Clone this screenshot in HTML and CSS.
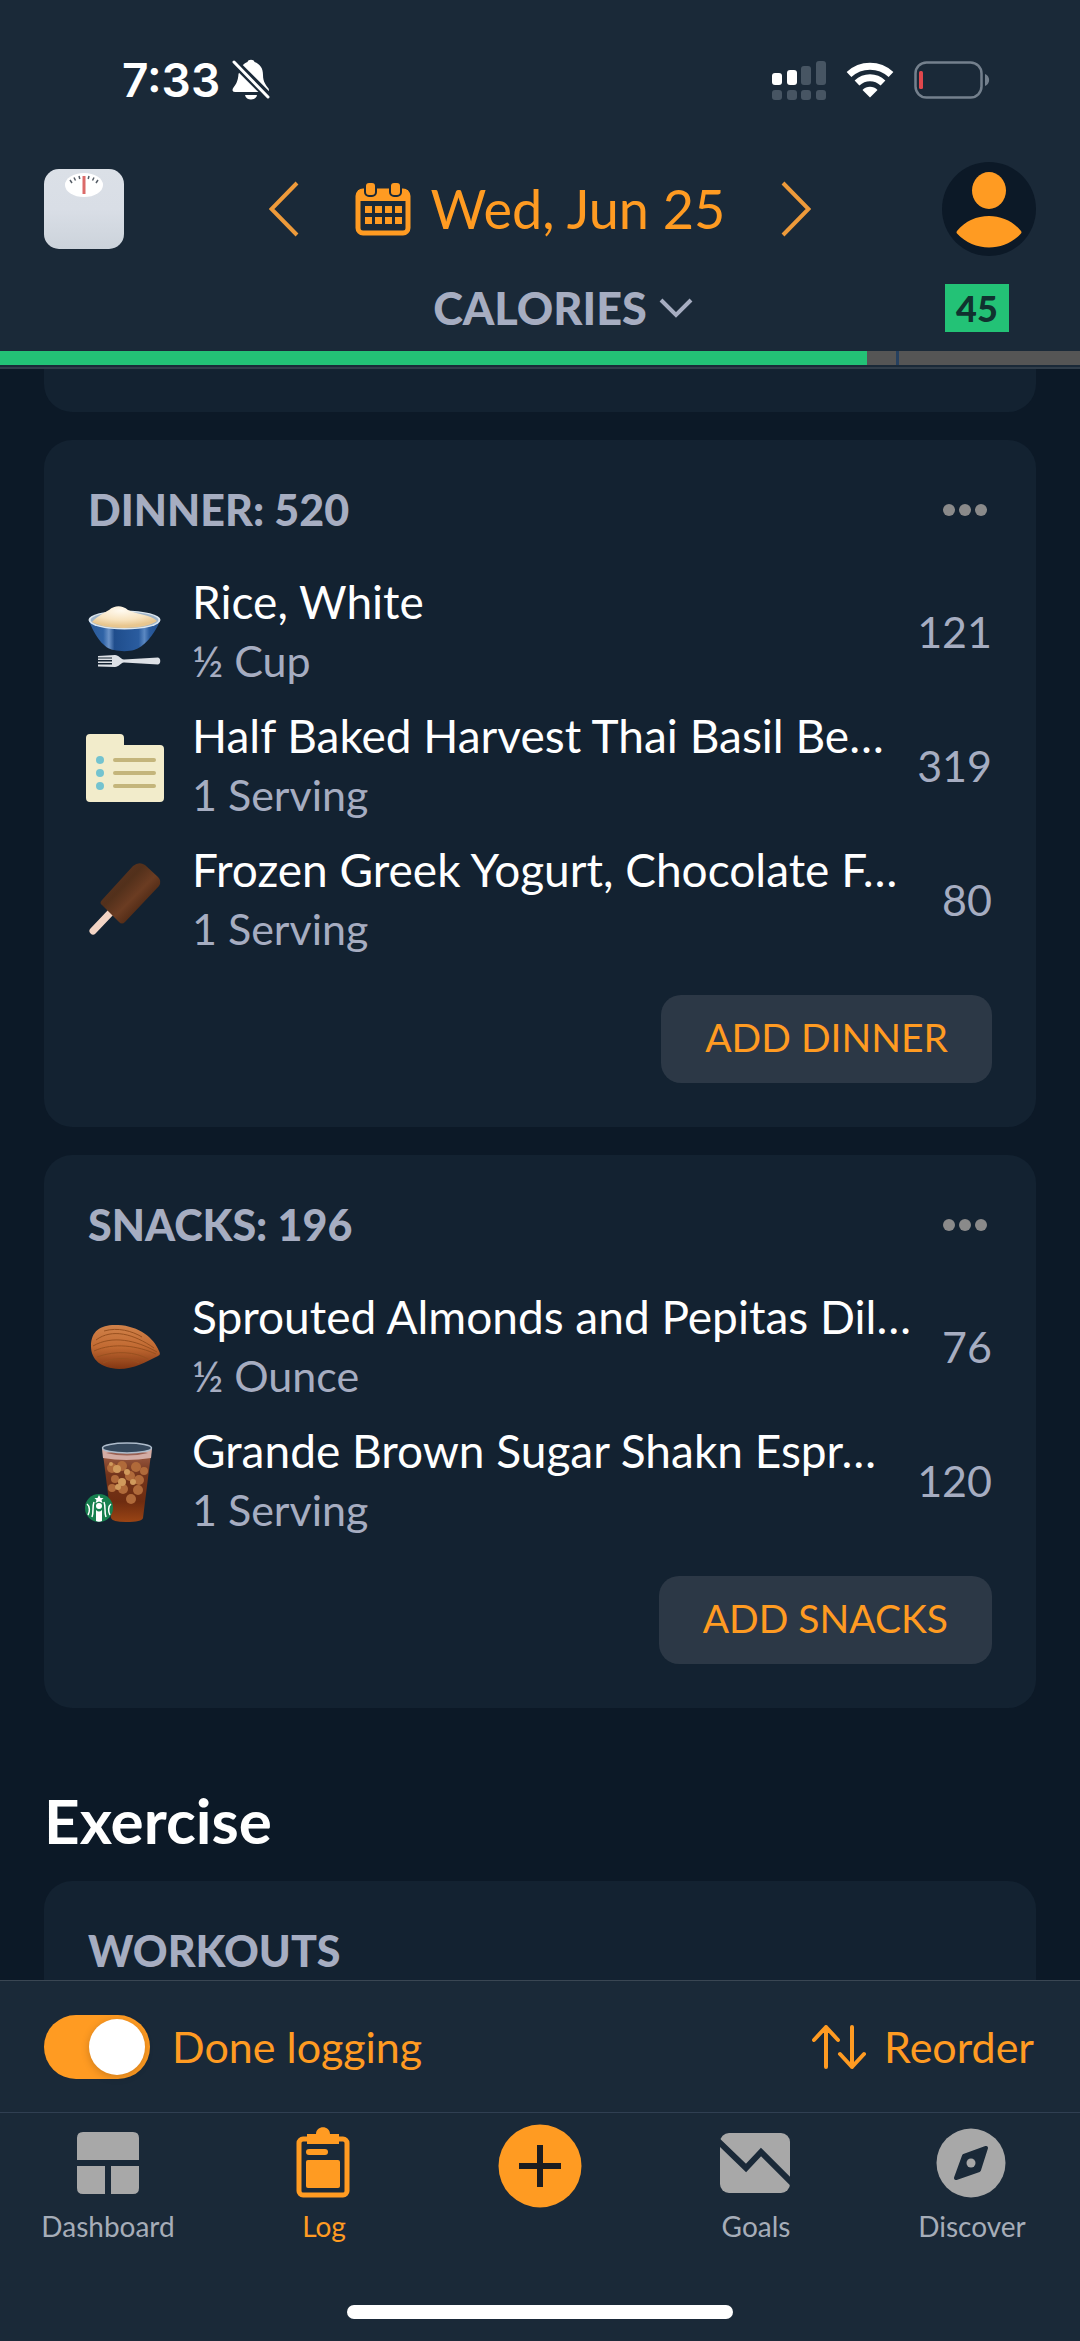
FILE: index.html
```html
<!DOCTYPE html>
<html lang="en">
<head>
    <meta charset="UTF-8">
    <meta name="viewport" content="width=device-width, initial-scale=1">
    <title>Food Log</title>
    <link rel="stylesheet" href="styles.css">
</head>
<body>

    <header class="header">
        <div class="status">
            <div class="status-left">
                <span class="time">7:33</span>
                <svg class="bell" width="38" height="42" viewBox="0 0 38 42">
                    <path fill="#fff" d="M10 7 C12 4.500 14 3.500 15.500 3 C16 0 22 0 22.500 3 C28 5 31 9 31 16 C31 23 34 26 36.500 29.500 C37.500 31.500 37 33 34.500 33 L3 33 C0 33 0 30.500 1.500 28.500 C4 25.500 6 22 6.500 15 Z"/>
                    <path fill="#fff" d="M13 36 L25 36 C24 42 14 42 13 36 Z"/>
                    <path stroke="#1a2938" stroke-width="8" d="M1 2 L37 38"/>
                    <path stroke="#fff" stroke-width="3" stroke-linecap="round" d="M2 3 L36 38"/>
                </svg>
            </div>
            <div class="status-right">
                <svg width="54" height="40" viewBox="0 0 54 40">
                    <g fill="#fff">
                        <rect x="0" y="13" width="10" height="12" rx="3"/>
                        <rect x="15" y="10" width="10" height="15" rx="3"/>
                    </g>
                    <g fill="#475563">
                        <rect x="29" y="6" width="10" height="19" rx="3"/>
                        <rect x="44" y="1" width="10" height="24" rx="3"/>
                        <rect x="0" y="30" width="10" height="10" rx="3"/>
                        <rect x="15" y="30" width="10" height="10" rx="3"/>
                        <rect x="29" y="30" width="10" height="10" rx="3"/>
                        <rect x="44" y="30" width="10" height="10" rx="3"/>
                    </g>
                </svg>
                <svg width="48" height="36" viewBox="0 0 48 36">
                    <g fill="none" stroke="#fff" stroke-width="7">
                        <path d="M3 12.500 C15 1.500 33 1.500 45 12.500"/>
                        <path d="M11 21 C18.500 14 29.500 14 37 21"/>
                    </g>
                    <path fill="#fff" d="M24 35.500 L16.500 28 C20.500 23.800 27.500 23.800 31.500 28 Z"/>
                </svg>
                <svg width="76" height="38" viewBox="0 0 76 38">
                    <rect x="1.500" y="1.500" width="66" height="35" rx="11" fill="none" stroke="#74808d" stroke-width="2.500"/>
                    <rect x="5" y="10" width="4" height="18" rx="1.500" fill="#e0474c"/>
                    <path fill="#74808d" d="M71 13 C76.500 15 76.500 23 71 25 Z"/>
                </svg>
            </div>
        </div>

        <div class="date-row">
            <button class="icon-btn" aria-label="Weigh in">
                <svg width="80" height="82" viewBox="0 0 80 82">
                    <defs>
                        <linearGradient id="scaleBody" x1="0" y1="0" x2="0" y2="1">
                            <stop offset="0" stop-color="#dbe0e7"/>
                            <stop offset="0.500" stop-color="#d9dee6"/>
                            <stop offset="1" stop-color="#ccd3db"/>
                        </linearGradient>
                    </defs>
                    <rect y="1" width="80" height="80" rx="15" fill="url(#scaleBody)"/>
                    <ellipse cx="40" cy="17" rx="19" ry="12" fill="#fff"/>
                    <g stroke="#555d66" stroke-width="1.500">
                        <path d="M26 12 l2 3 M30 9.500 l1.500 3 M35 8 l0.800 3 M45 8 l-0.800 3 M50 9.500 l-1.500 3 M54 12 l-2 3"/>
                    </g>
                    <rect x="38.500" y="8" width="3" height="18" fill="#db6a69"/>
                </svg>
            </button>
            <div class="date-nav">
                <button class="icon-btn" aria-label="Previous day">
                    <svg width="30" height="56" viewBox="0 0 30 56"><path class="line" d="M28 2 L2.500 28 L28 54"/></svg>
                </button>
                <button class="date-btn">
                    <svg width="56" height="54" viewBox="0 0 56 54">
                        <rect x="3" y="9" width="50" height="42" rx="5" fill="none" stroke="#ff9b22" stroke-width="5"/>
                        <rect x="3" y="8" width="50" height="11" fill="#ff9b22"/>
                        <g fill="#ff9b22" stroke="#1a2938" stroke-width="2">
                            <rect x="10" y="0" width="11" height="14" rx="4"/>
                            <rect x="35" y="0" width="11" height="14" rx="4"/>
                        </g>
                        <g fill="#ff9b22">
                            <path d="M10 24h7v7h-7z M20 24h7v7h-7z M30 24h7v7h-7z M40 24h7v7h-7z"/>
                            <path d="M10 35h7v7h-7z M20 35h7v7h-7z M30 35h7v7h-7z M40 35h7v7h-7z"/>
                        </g>
                    </svg>
                    <span>Wed, Jun 25</span>
                </button>
                <button class="icon-btn" aria-label="Next day">
                    <svg width="30" height="56" viewBox="0 0 30 56"><path class="line" d="M2 2 L27.500 28 L2 54"/></svg>
                </button>
            </div>
            <button class="icon-btn profile" aria-label="Profile">
                <svg width="94" height="94" viewBox="0 0 94 94">
                    <circle cx="47" cy="47" r="47" fill="#0c1927"/>
                    <ellipse cx="47" cy="28.500" rx="17" ry="18.500" fill="#ff9b22"/>
                    <path fill="#ff9b22" d="M15 69 C31 49 63 49 79 69 C79.800 70 79.500 71 79 71.500 C62 90 32 90 15 71.500 C14.500 71 14.200 70 15 69 Z"/>
                </svg>
            </button>
        </div>

        <div class="budget-row">
            <button class="budget-btn">
                <span>CALORIES</span>
                <svg width="34" height="22" viewBox="0 0 34 22"><path fill="none" stroke="#a6adc1" stroke-width="4" d="M2 3 L17 18 L32 3"/></svg>
            </button>
            <span class="badge">45</span>
        </div>

        <div class="progress">
            <div class="progress-fill"></div>
            <div class="progress-mark"></div>
        </div>
    </header>

    <main class="content">
        <section class="card card-prev"></section>

        <section class="card">
            <div class="card-head">
                <h2>DINNER: 520</h2>
                <button class="more" aria-label="Dinner options"><i></i><i></i><i></i></button>
            </div>
            <ul class="foods">
                <li class="food">
                    <svg class="food-icon" width="80" height="80" viewBox="0 0 80 80">
                        <defs>
                            <linearGradient id="bowl" x1="0" y1="0" x2="1" y2="0">
                                <stop offset="0" stop-color="#2c5a96"/>
                                <stop offset="0.200" stop-color="#2f63a6"/>
                                <stop offset="0.280" stop-color="#6b93c8"/>
                                <stop offset="0.360" stop-color="#1f4d8c"/>
                                <stop offset="0.700" stop-color="#2a5c9f"/>
                                <stop offset="0.780" stop-color="#5b88c2"/>
                                <stop offset="0.850" stop-color="#2a5c9f"/>
                                <stop offset="1" stop-color="#234f8a"/>
                            </linearGradient>
                            <radialGradient id="rice" cx="0.450" cy="0.200" r="0.700">
                                <stop offset="0" stop-color="#fffaf0"/>
                                <stop offset="0.600" stop-color="#f8e4c0"/>
                                <stop offset="1" stop-color="#e8c68f"/>
                            </radialGradient>
                        </defs>
                        <path fill="url(#bowl)" d="M5 28 C11 43 20 56 30 57 C36 58.500 45 58.500 50 57 C60 54 70 42 76 28 Z"/>
                        <ellipse cx="40.500" cy="27" rx="36" ry="9.500" fill="#dce6ee"/>
                        <ellipse cx="40.500" cy="27" rx="34" ry="8" fill="#9fb4c8"/>
                        <path fill="url(#rice)" d="M8 29 C15 22 20 20 25 17 C31 12 38 12 44 17 C53 22 66 21 73 28 C62 37 20 37 8 29 Z"/>
                        <path fill="#dde1e6" d="M14 63 L31 62 C35 62 36 66 40 66.500 L74 64.500 C77 65 77 71 74 71.500 L40 69.500 C36 70 35 74 31 74 L14 73.500 L14 71.500 L28 71.500 L28 70 L14 70 L14 68.500 L28 68.500 L28 67 L14 67 L14 65.500 L28 65.500 L28 64.500 L14 64.500 Z"/>
                    </svg>
                    <div class="food-text"><h3>Rice, White</h3><p>½ Cup</p></div>
                    <span class="cals">121</span>
                </li>
                <li class="food">
                    <svg class="food-icon" width="80" height="80" viewBox="0 0 80 80">
                        <path fill="#f2eccb" d="M6 7 H36 Q40 7 40 11 V18 H76 Q80 18 80 22 V71 Q80 75 76 75 H6 Q2 75 2 71 V11 Q2 7 6 7 Z"/>
                        <g fill="#74c3cf"><circle cx="16" cy="33" r="4"/><circle cx="16" cy="46" r="4"/><circle cx="16" cy="59" r="4"/></g>
                        <path stroke="#c4b57b" stroke-width="4" stroke-linecap="round" d="M31 33 H70 M31 46 H70 M31 59 H70"/>
                    </svg>
                    <div class="food-text"><h3>Half Baked Harvest Thai Basil Be…</h3><p>1 Serving</p></div>
                    <span class="cals">319</span>
                </li>
                <li class="food">
                    <svg class="food-icon" width="80" height="80" viewBox="0 0 80 80">
                        <defs>
                            <linearGradient id="choc" x1="0.200" y1="0.200" x2="0.800" y2="0.800">
                                <stop offset="0" stop-color="#5a331f"/>
                                <stop offset="0.300" stop-color="#52301b"/>
                                <stop offset="0.600" stop-color="#6b3c22"/>
                                <stop offset="1" stop-color="#42210f"/>
                            </linearGradient>
                        </defs>
                        <path stroke="#f3d5c5" stroke-width="7" stroke-linecap="round" d="M9 70 L28 50"/>
                        <path fill="url(#choc)" d="M18 39 L49 5 Q55 0 61 4 L74 16 Q78 20 75 25 L41 61 Q38 64 35 61 L18 44 Q15 42 18 39 Z"/>
                    </svg>
                    <div class="food-text"><h3>Frozen Greek Yogurt, Chocolate F…</h3><p>1 Serving</p></div>
                    <span class="cals">80</span>
                </li>
            </ul>
            <div class="card-foot">
                <button class="add-btn">ADD DINNER</button>
            </div>
        </section>

        <section class="card">
            <div class="card-head">
                <h2>SNACKS: 196</h2>
                <button class="more" aria-label="Snack options"><i></i><i></i><i></i></button>
            </div>
            <ul class="foods">
                <li class="food">
                    <svg class="food-icon" width="80" height="80" viewBox="0 0 80 80">
                        <defs>
                            <linearGradient id="almond" x1="0" y1="0" x2="0" y2="1">
                                <stop offset="0" stop-color="#d0824a"/>
                                <stop offset="0.500" stop-color="#c26a32"/>
                                <stop offset="1" stop-color="#823612"/>
                            </linearGradient>
                        </defs>
                        <path fill="url(#almond)" d="M7 38 C7 22 18 16 34 17 C55 18 70 30 75 43 C76.500 46 76 47 74 48 C62 54 50 61 35 61 C17 60 7 52 7 38 Z"/>
                        <path fill="none" stroke="#98501f" stroke-width="1" d="M12 32 C28 20 50 26 70 40 M9 38 C28 27 52 32 73 44 M10 43 C30 34 54 38 72 46 M13 49 C32 42 52 44 64 51 M19 55 C34 48 46 50 55 55 M20 23 C34 19 48 23 58 29"/>
                    </svg>
                    <div class="food-text"><h3>Sprouted Almonds and Pepitas Dil…</h3><p>½ Ounce</p></div>
                    <span class="cals">76</span>
                </li>
                <li class="food">
                    <svg class="food-icon" width="80" height="80" viewBox="0 0 80 80">
                        <defs>
                            <linearGradient id="coffee" x1="0" y1="0" x2="0" y2="1">
                                <stop offset="0" stop-color="#9a5a42"/>
                                <stop offset="0.300" stop-color="#74351c"/>
                                <stop offset="0.700" stop-color="#6e2c10"/>
                                <stop offset="1" stop-color="#9a4414"/>
                            </linearGradient>
                        </defs>
                        <path fill="url(#coffee)" d="M19 12 L67 12 L59 76 Q58 80 42 80 Q28 80 27 76 Z"/>
                        <g fill="#b06a3a">
                            <circle cx="28" cy="26" r="5"/><circle cx="38" cy="24" r="5"/><circle cx="52" cy="25" r="5"/>
                            <circle cx="60" cy="29" r="4"/><circle cx="46" cy="34" r="5"/><circle cx="31" cy="37" r="4"/>
                            <circle cx="55" cy="38" r="5"/><circle cx="28" cy="46" r="4"/><circle cx="39" cy="47" r="5"/>
                            <circle cx="54" cy="48" r="5"/><circle cx="47" cy="57" r="5"/>
                        </g>
                        <g fill="#d09a5c">
                            <circle cx="33" cy="27" r="4"/><circle cx="43" cy="30" r="3"/><circle cx="38" cy="40" r="4"/>
                            <circle cx="49" cy="40" r="3"/><circle cx="34" cy="45" r="3"/><circle cx="27" cy="22" r="2"/>
                        </g>
                        <path fill="#d3aca4" d="M18 7 L68 7 L67 16 Q42 20 19 16 Z"/>
                        <path fill="#9a6254" d="M22 11 Q43 6 64 11 Q43 16 22 11 Z"/>
                        <ellipse cx="43" cy="6" rx="24.500" ry="5" fill="#34475b" stroke="#aebccb" stroke-width="1.500"/>
                        <circle cx="15" cy="66" r="14" fill="#17804f"/>
                        <g fill="#fff">
                            <path d="M15 53 l1.500 3 l3 0 l-2 2 l1 3 l-3.500 -1.500 l-3.500 1.500 l1 -3 l-2 -2 l3 0 Z"/>
                            <circle cx="15" cy="64" r="3"/>
                            <path d="M12 68 Q15 71 18 68 L18 79 Q15 80.500 12 79 Z"/>
                        </g>
                        <path fill="none" stroke="#fff" stroke-width="1.500" d="M10 60 C8 65 10 70 8 75 M20 60 C22 65 20 70 22 75 M3 62 C6 64 6 70 4 73 M27 62 C24 64 24 70 26 73"/>
                    </svg>
                    <div class="food-text"><h3>Grande Brown Sugar Shakn Espr…</h3><p>1 Serving</p></div>
                    <span class="cals">120</span>
                </li>
            </ul>
            <div class="card-foot">
                <button class="add-btn">ADD SNACKS</button>
            </div>
        </section>

        <h1 class="section-title">Exercise</h1>

        <section class="card card-workouts">
            <div class="card-head">
                <h2>WORKOUTS</h2>
            </div>
        </section>
    </main>

    <footer class="footer">
        <div class="actions">
            <label class="done">
                <input type="checkbox" class="switch" checked>
                <span>Done logging</span>
            </label>
            <button class="reorder">
                <svg width="54" height="46" viewBox="0 0 54 46">
                    <path fill="none" stroke="#ff9b22" stroke-width="4" stroke-linecap="round" stroke-linejoin="round" d="M14 43 V3 M2 16 L14 3 L26 16 M40 3 V43 M28 30 L40 43 L52 30"/>
                </svg>
                <span>Reorder</span>
            </button>
        </div>

        <nav class="tabs">
            <a href="#" class="tab">
                <svg width="72" height="84" viewBox="0 0 72 84">
                    <path fill="#a8a8a8" d="M5 36 V14 Q5 8 11 8 H61 Q67 8 67 14 V36 Z M5 42 H33 V70 H11 Q5 70 5 64 Z M39 42 H67 V64 Q67 70 61 70 H39 Z"/>
                </svg>
                <span>Dashboard</span>
            </a>
            <a href="#" class="tab active">
                <svg width="72" height="84" viewBox="0 0 72 84">
                    <rect x="11" y="15" width="48" height="56" rx="4" fill="none" stroke="#ff9b22" stroke-width="5"/>
                    <path fill="#ff9b22" d="M19 10 H28 C28 1 42 1 42 10 H51 V20 H19 Z"/>
                    <rect x="18" y="25" width="22" height="6" rx="3" fill="#ff9b22"/>
                    <rect x="18" y="36" width="34" height="28" rx="2" fill="#ff9b22"/>
                </svg>
                <span>Log</span>
            </a>
            <a href="#" class="tab" aria-label="Add">
                <svg width="84" height="84" viewBox="0 0 84 84">
                    <circle cx="42" cy="42" r="41.500" fill="#ff9b22"/>
                    <path stroke="#1c1d20" stroke-width="6" d="M42 21 V63 M21 42 H63"/>
                </svg>
            </a>
            <a href="#" class="tab">
                <svg width="72" height="84" viewBox="0 0 72 84">
                    <rect x="0" y="9" width="70" height="60" rx="9" fill="#a8a8a8"/>
                    <path fill="none" stroke="#1a2938" stroke-width="6" d="M-3 16 L26 44 L41 28 L75 62"/>
                </svg>
                <span>Goals</span>
            </a>
            <a href="#" class="tab">
                <svg width="72" height="84" viewBox="0 0 72 84">
                    <circle cx="35" cy="39" r="34.500" fill="#a8a8a8"/>
                    <path fill="#1a2938" stroke="#1a2938" stroke-width="4" stroke-linejoin="round" d="M28 32 L50 24 L43 46 L20 54 Z"/>
                    <circle cx="35" cy="39" r="4.500" fill="#a8a8a8"/>
                </svg>
                <span>Discover</span>
            </a>
        </nav>
        <div class="home-bar"></div>
    </footer>

</body>
</html>
```

FILE: styles.css
```css
* {
    box-sizing: border-box;
}
body {
    display: flex;
    flex-direction: column;
    height: 100vh;
    margin: 0;
    background: #0c1927;
    color: #fff;
    font-family: Lato, "Open Sans", sans-serif;
    font-size: 44px;
    overflow: hidden;
}
button {
    padding: 0;
    border: none;
    background: none;
    color: #ff9b22;
    font-family: inherit;
    cursor: pointer;
}
svg {
    display: block;
    flex: none;
}
h1, h2, h3, p, ul {
    margin: 0;
    padding: 0;
}

/* header */
.header {
    flex: none;
    background: #1a2938;
    border-bottom: 2px solid #303d4a;
    padding-bottom: 2px;
}
.status {
    display: flex;
    justify-content: space-between;
    align-items: center;
    height: 160px;
    padding: 0 90px 0 122px;
}
.status-left {
    display: flex;
    align-items: center;
    gap: 12px;
}
.time {
    font-family: Inter, sans-serif;
    font-size: 46px;
    font-weight: 600;
}
.status-right {
    display: flex;
    align-items: center;
    gap: 20px;
}
.date-row {
    display: grid;
    grid-template-columns: 1fr auto 1fr;
    align-items: center;
    height: 98px;
    padding: 0 44px;
}
.icon-btn {
    justify-self: start;
}
.profile {
    justify-self: end;
}
.date-nav {
    display: flex;
    align-items: center;
    gap: 56px;
}
.date-btn {
    display: flex;
    align-items: center;
    gap: 20px;
    font-size: 54px;
    line-height: 64px;
}
.line {
    fill: none;
    stroke: #ee9a3a;
    stroke-width: 4;
}
.budget-row {
    display: grid;
    grid-template-columns: 1fr auto 1fr;
    align-items: center;
    height: 93px;
    padding: 10px 71px 4px;
}
.budget-btn {
    grid-column: 2;
    display: flex;
    align-items: center;
    gap: 12px;
    padding-left: 46px; /* keeps the word itself centred */
    color: #a6adc1;
    font-size: 45px;
    font-weight: 900;
    line-height: 52px;
}
.badge {
    justify-self: end;
    width: 64px;
    background: #23c276;
    color: #10322f;
    font-size: 36px;
    font-weight: 900;
    line-height: 48px;
    text-align: center;
}
.progress {
    position: relative;
    height: 14px;
    background: #555;
}
.progress-fill {
    width: 80.3%;
    height: 100%;
    background: #23c276;
}
.progress-mark {
    position: absolute;
    top: 0;
    left: 83%;
    width: 3px;
    height: 100%;
    background: #26405f;
}

/* log */
.content {
    flex: 1;
    min-height: 0;
    padding: 0 44px;
    overflow: hidden;
}
.card {
    margin-bottom: 28px;
    padding: 40px 44px 44px;
    background: #132231;
    border-radius: 28px;
}
.card-prev {
    height: 43px;
    padding: 0;
    border-radius: 0 0 28px 28px;
}
.card-head {
    display: flex;
    justify-content: space-between;
    align-items: center;
    height: 60px;
    margin-bottom: 26px;
}
.card-head h2 {
    color: #a6adc1;
    font-size: 43px;
    font-weight: 900;
    line-height: 60px;
}
.more {
    display: flex;
    gap: 4px;
    padding: 8px 5px;
}
.more i {
    width: 12px;
    height: 12px;
    border-radius: 50%;
    background: #8a8a8a;
}
.foods {
    list-style: none;
    margin-left: -4px;
}
.food {
    display: flex;
    align-items: center;
    height: 134px;
}
.food-text {
    flex: 1;
    min-width: 0;
    margin: 0 10px 0 28px;
    padding-bottom: 4px;
}
.food-text h3 {
    font-size: 46px;
    font-weight: 400;
    line-height: 60px;
    white-space: nowrap;
    overflow: hidden;
}
.food-text p {
    color: #a6adc1;
    font-size: 43px;
    line-height: 58px;
}
.cals {
    padding-bottom: 4px;
    color: #a6adc1;
    font-size: 43px;
}
.card-foot {
    display: flex;
    justify-content: flex-end;
    margin-top: 27px;
}
.add-btn {
    height: 88px;
    padding: 0 44px 4px;
    background: #2c3846;
    border-radius: 20px;
    font-size: 39px;
}
.section-title {
    padding: 48px 0 25px;
    font-size: 62px;
    font-weight: 700;
    line-height: 72px;
}
.card-workouts {
    margin-bottom: 0;
}

/* bottom bars */
.footer {
    flex: none;
    background: #1a2938;
    border-top: 1px solid #3a4653;
}
.actions {
    display: flex;
    justify-content: space-between;
    align-items: center;
    height: 132px;
    padding: 0 46px 0 44px;
    border-bottom: 1px solid #303f52;
}
.done {
    display: flex;
    align-items: center;
    gap: 22px;
    color: #ff9b22;
    font-size: 43px;
}
.switch {
    appearance: none;
    display: flex;
    justify-content: flex-end;
    width: 106px;
    height: 64px;
    margin: 0;
    padding: 4px 5px;
    background: #ff9b22;
    border-radius: 32px;
}
.switch::before {
    content: "";
    width: 56px;
    height: 56px;
    border-radius: 50%;
    background: #fff;
    box-shadow: 0 2px 8px rgba(0,0,0,0.2);
}
.reorder {
    display: flex;
    align-items: center;
    gap: 18px;
    font-size: 43px;
}
.tabs {
    display: grid;
    grid-template-columns: repeat(5, 1fr);
    padding-top: 11px;
}
.tab {
    display: flex;
    flex-direction: column;
    align-items: center;
    color: #a6adb8;
    font-size: 28px;
    line-height: 36px;
    text-decoration: none;
}
.active {
    color: #ff9b22;
}
.home-bar {
    width: 386px;
    height: 14px;
    margin: 61px auto 22px;
    background: #fff;
    border-radius: 7px;
}
```
